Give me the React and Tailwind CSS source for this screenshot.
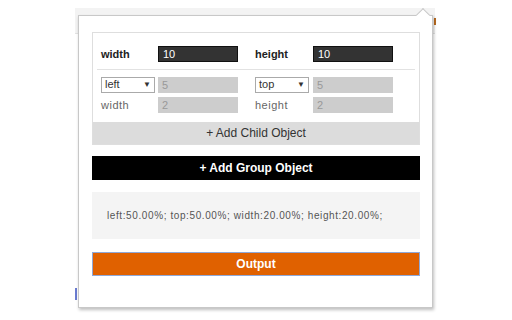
import { useState } from "react"

const Field = ({ value, dark }) => (
    <div
        className={
            dark
                ? "w-[80px] h-[16px] bg-[#333] border border-[#111] text-white text-[11px] leading-[14px] pl-[4px]"
                : "w-[80px] h-[16px] bg-[#cdcdcd] text-[#999] text-[11px] leading-[16px] pl-[4px]"
        }
    >
        {value}
    </div>
)

const Select = ({ value }) => (
    <div className="w-[54px] h-[16px] bg-white border border-[#aaa] flex items-center justify-between px-[3px] text-[11px] text-[#333]">
        <span>{value}</span>
        <span className="text-[8px]">▼</span>
    </div>
)

const App = () => {
    const [css] = useState("left:50.00%; top:50.00%; width:20.00%; height:20.00%;")

    return (
        <div className="relative w-[512px] h-[320px] bg-white overflow-hidden font-['Liberation_Sans',Arial,sans-serif]">
            {/* page behind the popup */}
            <div className="absolute left-[75px] top-[8px] w-[360px] h-[26px] bg-[#f3f3f3] border-b border-[#e2e2e2]" />
            <div className="absolute left-[434px] top-[18px] w-[2px] h-[7px] bg-[#b86a20]" />
            <div className="absolute left-[75px] top-[288px] w-[2px] h-[12px] bg-[#6a7bd0]" />

            {/* popup */}
            <div className="absolute left-[78px] top-[15px] w-[355px] h-[293px] bg-white border border-[#c8c8c8] shadow-[1px_2px_3px_rgba(0,0,0,0.25)]">
                <div className="absolute right-[4px] -top-[6px] w-[10px] h-[10px] bg-white border-l border-t border-[#c8c8c8] rotate-45" />
                <div className="pl-[13px] pt-[16px] w-[341px] flex flex-col">
                    <div className="border border-[#dedede] flex flex-col">
                        <div className="px-[8px] pt-[13px] pb-[6px] flex items-center">
                            <span className="w-[57px] text-[11px] font-bold text-[#222]">width</span>
                            <Field value="10" dark />
                            <span className="w-[58px] ml-[17px] text-[11px] font-bold text-[#222]">height</span>
                            <Field value="10" dark />
                        </div>
                        <div className="mx-[4px] border-t border-[#e2e2e2]" />
                        <div className="px-[8px] pt-[7px] flex flex-col gap-[4px]">
                            <div className="flex items-center">
                                <Select value="left" />
                                <div className="ml-[3px]"><Field value="5" /></div>
                                <div className="ml-[17px]"><Select value="top" /></div>
                                <div className="ml-[4px]"><Field value="5" /></div>
                            </div>
                            <div className="flex items-center">
                                <span className="w-[57px] text-[11px] text-[#666] tracking-[0.5px]">width</span>
                                <Field value="2" />
                                <span className="w-[58px] ml-[17px] text-[11px] text-[#666] tracking-[0.5px]">height</span>
                                <Field value="2" />
                            </div>
                        </div>
                        <button className="mt-[9px] h-[22px] bg-[#dcdcdc] text-[12px] text-[#333]">+ Add Child Object</button>
                    </div>
                    <button className="mt-[11px] h-[24px] bg-black text-white text-[12px] font-bold">+ Add Group Object</button>
                    <div className="mt-[12px] h-[47px] bg-[#f4f4f4] flex items-center pl-[15px] text-[10px] text-[#555] tracking-[0.6px]">
                        {css}
                    </div>
                    <button className="mt-[13px] h-[24px] bg-[#e06100] border border-[#8fa8d8] text-white text-[12px] font-bold">Output</button>
                </div>
            </div>
        </div>
    )
}

export default App
